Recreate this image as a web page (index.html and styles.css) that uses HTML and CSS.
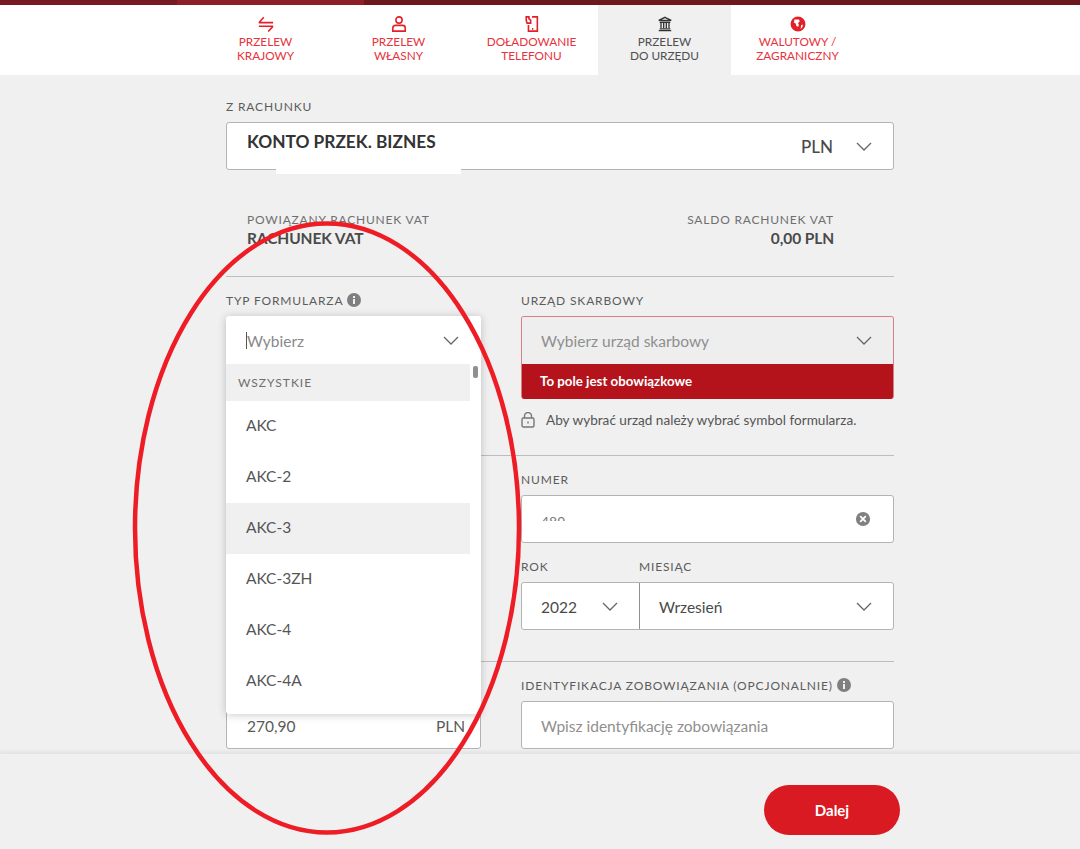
FILE: index.html
```html
<!DOCTYPE html>
<html lang="pl">
<head>
<meta charset="utf-8">
<title>Przelew do urzędu</title>
<link rel="stylesheet" href="styles.css">
</head>
<body>
<div class="page">
  <div class="topbar"></div>
  <nav class="nav">
    <a class="tab">
      <svg class="tab-icon" viewBox="0 0 18 18"><path d="M1 7.500h16M1 7.500L6.500 1.500M17 11.500H1M17 11.500l-5.500 6" /></svg>
      <span>PRZELEW<br>KRAJOWY</span>
    </a>
    <a class="tab">
      <svg class="tab-icon" viewBox="0 0 18 18"><circle cx="9" cy="4.500" r="3.500"/><path d="M5 10.500h8a3 3 0 0 1 3 3v3.500H2v-3.500a3 3 0 0 1 3-3z"/></svg>
      <span>PRZELEW<br>WŁASNY</span>
    </a>
    <a class="tab">
      <svg class="tab-icon" viewBox="0 0 18 18"><path d="M9 1h6v16H5V10M9 14.500h1.500"/><path d="M2.500 1h3v2L7.500 5v3h-4L2.500 5z" /></svg>
      <span>DOŁADOWANIE<br>TELEFONU</span>
    </a>
    <a class="tab tab-active">
      <svg class="tab-icon" viewBox="0 0 18 18"><path d="M9 1.500l7 3.500H2zM3 7h12M4.500 8v5.500M7.500 8v5.500M10.500 8v5.500M13.500 8v5.500M3 14.500h12M2 16.500h14"/></svg>
      <span>PRZELEW<br>DO URZĘDU</span>
    </a>
    <a class="tab">
      <svg class="tab-icon" viewBox="0 0 18 18"><circle cx="9" cy="9" r="7.500" class="globe"/><path class="globe-land" d="M5 4h5l1 2-2 2 1 2-1 2.500-2-1.500-.500-2.500-2-1zM12.500 10.500l2-1-.500 3-2 2z"/></svg>
      <span>WALUTOWY /<br>ZAGRANICZNY</span>
    </a>
  </nav>

  <main class="main">
    <div class="form">
      <div class="label">Z RACHUNKU</div>
      <div class="box account">
        <span class="account-name">KONTO PRZEK. BIZNES</span>
        <span class="account-cur">PLN</span>
        <svg class="chev" viewBox="0 0 16 9"><path d="M1 1l7 7 7-7"/></svg>
      </div>

      <div class="vat">
        <div>
          <div class="vat-label">POWIĄZANY RACHUNEK VAT</div>
          <div class="vat-value">RACHUNEK VAT</div>
        </div>
        <div class="vat-right">
          <div class="vat-label">SALDO RACHUNEK VAT</div>
          <div class="vat-value">0,00 PLN</div>
        </div>
      </div>

      <section class="row row-first">
        <div class="col">
          <div class="label">TYP FORMULARZA
            <svg class="info" viewBox="0 0 14 14"><circle cx="7" cy="7" r="7"/><rect x="6" y="6" width="2" height="5" class="info-i"/><rect x="6" y="3" width="2" height="2" class="info-i"/></svg>
          </div>
          <div class="menu-anchor">
            <div class="menu">
              <div class="menu-head">
                <span class="caret"></span><span class="menu-ph">Wybierz</span>
                <svg class="chev" viewBox="0 0 16 9"><path d="M1 1l7 7 7-7"/></svg>
              </div>
              <div class="menu-list">
                <div class="menu-group">WSZYSTKIE</div>
                <div class="menu-item">AKC</div>
                <div class="menu-item">AKC-2</div>
                <div class="menu-item menu-item-hover">AKC-3</div>
                <div class="menu-item">AKC-3ZH</div>
                <div class="menu-item">AKC-4</div>
                <div class="menu-item">AKC-4A</div>
              </div>
              <div class="thumb"></div>
            </div>
          </div>
        </div>
        <div class="col">
          <div class="label">URZĄD SKARBOWY</div>
          <div class="error-box">
            <div class="error-select">
              <span class="ph">Wybierz urząd skarbowy</span>
              <svg class="chev" viewBox="0 0 16 9"><path d="M1 1l7 7 7-7"/></svg>
            </div>
            <div class="error-msg">To pole jest obowiązkowe</div>
          </div>
          <div class="hint">
            <svg class="lock" viewBox="0 0 14 16"><rect x="1" y="6" width="12" height="9" rx="1.500"/><path d="M3.500 6V4a3.500 3.500 0 0 1 7 0v2M7 9.500v2"/></svg>
            <span>Aby wybrać urząd należy wybrać symbol formularza.</span>
          </div>
        </div>
      </section>

      <section class="row row-second">
        <div class="col"></div>
        <div class="col">
          <div class="label">NUMER</div>
          <div class="box field">
            <span class="masked">489</span>
            <svg class="clear" viewBox="0 0 16 16"><circle cx="8" cy="8" r="8"/><path d="M5.200 5.200l5.600 5.600M10.800 5.200l-5.600 5.600"/></svg>
          </div>
          <div class="period">
            <div class="period-labels">
              <div class="label period-year">ROK</div>
              <div class="label">MIESIĄC</div>
            </div>
            <div class="box period-box">
              <div class="period-first period-cell">
                <span>2022</span>
                <svg class="chev" viewBox="0 0 16 9"><path d="M1 1l7 7 7-7"/></svg>
              </div>
              <div class="period-month period-cell">
                <span>Wrzesień</span>
                <svg class="chev" viewBox="0 0 16 9"><path d="M1 1l7 7 7-7"/></svg>
              </div>
            </div>
          </div>
        </div>
      </section>

      <section class="row row-third">
        <div class="col">
          <div class="label">KWOTA</div>
          <div class="box field amount"><span>270,90</span><span>PLN</span></div>
        </div>
        <div class="col">
          <div class="label">IDENTYFIKACJA ZOBOWIĄZANIA (OPCJONALNIE)
            <svg class="info" viewBox="0 0 14 14"><circle cx="7" cy="7" r="7"/><rect x="6" y="6" width="2" height="5" class="info-i"/><rect x="6" y="3" width="2" height="2" class="info-i"/></svg>
          </div>
          <div class="box field"><span class="ph">Wpisz identyfikację zobowiązania</span></div>
        </div>
      </section>
    </div>
  </main>

  <footer class="footer">
    <button class="next">Dalej</button>
  </footer>

  <div class="patch patch-account"></div>
  <svg class="annotation" viewBox="0 0 1080 849"><ellipse cx="327" cy="528" rx="192" ry="304.500"/></svg>
</div>
</body>
</html>
```

FILE: styles.css
```css
* { box-sizing: border-box; }
html, body { margin: 0; padding: 0; }
body {
  font-family: Lato, "Open Sans", "Liberation Sans", sans-serif;
  color: #4a4a4a;
  background: #f0f0f0;
}
.page {
  position: relative;
  width: 1080px;
  height: 849px;
  overflow: hidden;
  display: flex;
  flex-direction: column;
}
.topbar {
  height: 5px;
  flex: none;
  background: linear-gradient(to right, #781a22 0, #781a22 177px, #8c1f28 177px, #8c1f28 364px, #6c181e 364px);
}
.nav {
  height: 70px;
  flex: none;
  display: flex;
  padding-left: 199px;
  background: #fff;
}
.tab {
  width: 133px;
  padding-top: 11px;
  display: flex;
  flex-direction: column;
  align-items: center;
  font-size: 11.800px;
  line-height: 13.500px;
  text-align: center;
  color: #e8323c;
}
.tab span { display: block; margin-top: 3px; }
.tab-active { background: #f0f0f0; color: #4f4f4f; }
.tab-icon {
  width: 16px;
  height: 16px;
  fill: none;
  stroke: #e3202a;
  stroke-width: 1.800;
}
.tab-active .tab-icon { stroke: #333; stroke-width: 1.500; }
.globe { fill: #e3202a; stroke: #e3202a; }
.globe-land { fill: #fff; stroke: none; }

.main {
  flex: 1;
  min-height: 0;
  overflow: hidden;
  padding: 23px 0 0 226px;
}
.form { width: 668px; }
.label {
  font-size: 12px;
  line-height: 16px;
  letter-spacing: 0.850px;
  color: #5c5c5c;
  padding-top: 1px;
  height: 16px;
  margin-bottom: 8px;
  white-space: nowrap;
}
.info {
  width: 14px;
  height: 14px;
  margin-left: 0;
  vertical-align: -2px;
  fill: #7f7f7f;
}
.info-i { fill: #f0f0f0; }
.box {
  background: #fff;
  border: 1px solid #b4b4b4;
  border-radius: 3px;
}
.chev {
  width: 16px;
  height: 9px;
  flex: none;
  fill: none;
  stroke: #666;
  stroke-width: 1.300;
}
.account {
  height: 48px;
  display: flex;
  align-items: center;
  padding: 0 21px 0 20px;
}
.account-name {
  flex: 1;
  font-size: 17.300px;
  font-weight: 700;
  color: #333;
  margin-top: -10px;
}
.account-cur { font-size: 17px; font-weight: 500; margin-right: 23px; }
.vat {
  display: flex;
  justify-content: space-between;
  margin-top: 42px;
  padding: 0 60px 0 21px;
  height: 64px;
}
.vat-label { font-size: 12px; line-height: 16px; letter-spacing: 0.800px; color: #6f6f6f; }
.vat-value { font-size: 15.500px; line-height: 20px; font-weight: 700; letter-spacing: -0.100px; color: #4a4a4a; }
.vat-right { text-align: right; }
.row {
  display: grid;
  grid-template-columns: 255px 373px;
  column-gap: 40px;
  border-top: 1px solid #bdbdbd;
  padding-top: 15px;
}
.row-first { height: 179px; }
.row-second { height: 206px; }
.row-third { height: 91px; }
.col { min-width: 0; }
.menu-anchor { position: relative; height: 48px; }
.menu {
  position: absolute;
  z-index: 5;
  top: 0;
  left: 0;
  width: 255px;
  height: 398px;
  background: #fff;
  border-radius: 3px;
  box-shadow: 0 1px 8px rgba(0, 0, 0, 0.22);
  overflow: hidden;
}
.menu-head {
  height: 48px;
  display: flex;
  align-items: center;
  padding: 1px 22px 0 20px;
}
.caret { width: 1px; height: 17px; background: #555; flex: none; }
.menu-ph { flex: 1; font-size: 15.500px; color: #8a8a8a; }
.menu-list { width: 244px; }
.menu-group {
  height: 37px;
  line-height: 37px;
  padding-left: 12px;
  font-size: 12px;
  letter-spacing: 1px;
  color: #6f6f6f;
  background: #f0f0f0;
}
.menu-item {
  height: 51px;
  line-height: 49px;
  padding-left: 20px;
  font-size: 15.500px;
  color: #555;
}
.menu-item-hover { background: #f0f0f0; }
.thumb {
  position: absolute;
  top: 50px;
  right: 3px;
  width: 5px;
  height: 12px;
  border-radius: 2px;
  background: #8f8f8f;
}
.error-box {
  border: 1px solid #d78088;
  border-bottom: 0;
  border-radius: 3px;
  overflow: hidden;
}
.error-select {
  height: 47px;
  display: flex;
  align-items: center;
  justify-content: space-between;
  padding: 0 21px 0 19px;
  background: #eeeeee;
}
.ph { font-size: 15.500px; color: #8f8f8f; }
.error-msg {
  height: 35px;
  line-height: 35px;
  margin: 0 -1px;
  padding-left: 19px;
  font-size: 13.300px;
  font-weight: 700;
  color: #fff;
  background: #b5131b;
}
.hint {
  display: flex;
  align-items: center;
  gap: 11px;
  margin-top: 11px;
  height: 20px;
  font-size: 13.600px;
  color: #555;
}
.lock {
  width: 14px;
  height: 16px;
  fill: none;
  stroke: #777;
  stroke-width: 1.400;
}
.field {
  height: 48px;
  display: flex;
  align-items: center;
  justify-content: space-between;
  padding: 2px 22px 0 19px;
  font-size: 15.500px;
}
.masked {
  display: block;
  height: 8px;
  overflow: hidden;
  line-height: 18px;
  margin-top: -6px;
  font-size: 14px;
  color: #777;
}
.clear { width: 16px; height: 16px; margin-top: -2px; fill: #808080; stroke: #fff; stroke-width: 1.800; }
.period { margin-top: 15px; }
.period-labels { display: flex; }
.period-year { width: 118px; flex: none; }
.period-first { width: 117px; flex: none; }
.period-box { display: flex; height: 48px; }
.period-cell {
  display: flex;
  align-items: center;
  justify-content: space-between;
  padding: 1px 21px 0 19px;
  font-size: 15.500px;
}
.period-month { flex: 1; border-left: 1px solid #8f8f8f; }
.amount { padding-right: 15px; padding-left: 20px; color: #5a5a5a; }
.footer {
  height: 96px;
  flex: none;
  position: relative;
  display: flex;
  justify-content: flex-end;
  align-items: flex-start;
  padding: 31px 180px 0 0;
  background: #f0f0f0;
  border-top: 1px solid #e4e4e4;
  box-shadow: 0 -2px 3px rgba(0, 0, 0, 0.05);
}
.next {
  width: 136px;
  height: 50px;
  border: 0;
  border-radius: 25px;
  background: #d91a22;
  color: #fff;
  font-family: inherit;
  font-size: 15px;
  font-weight: 700;
}
.patch {
  position: absolute;
  background: #fff;
}
.patch-account { left: 276px; top: 165px; width: 185px; height: 9px; z-index: 6; }
.annotation {
  position: absolute;
  z-index: 10;
  left: 0;
  top: 0;
  width: 1080px;
  height: 849px;
  fill: none;
  stroke: #ee1c25;
  stroke-width: 4.500;
  pointer-events: none;
}
```
